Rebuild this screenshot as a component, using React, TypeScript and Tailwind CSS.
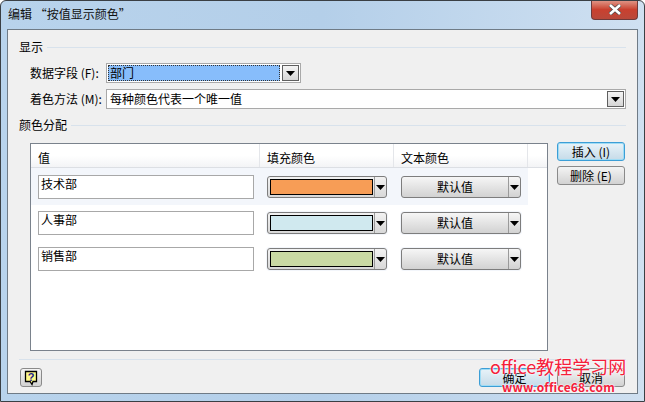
import { ReactNode } from "react";

const font = { fontFamily: '"Noto Sans CJK SC", "Liberation Sans", sans-serif' };

function Arrow() {
  return (
    <svg width="9" height="5" viewBox="0 0 9 5">
      <path d="M0 0h9L4.500 5z" fill="#000" />
    </svg>
  );
}

function ComboButton() {
  return (
    <div className="w-[17px] h-[16px] border border-[#5f5f5f] bg-gradient-to-b from-[#f4f4f4] to-[#d6d6d6] flex items-center justify-center">
      <Arrow />
    </div>
  );
}

function SectionTitle({ children, className }: { children: ReactNode; className?: string }) {
  return (
    <div className={`flex items-center h-[16px] pl-[11px] pr-[11px] ${className ?? ""}`}>
      <span className="pr-[4px] leading-none">{children}</span>
      <div className="flex-1 h-px bg-[#d8e2ec]" />
    </div>
  );
}

function Button({ children, focused, className }: { children: ReactNode; focused?: boolean; className?: string }) {
  return (
    <div
      className={`h-[19px] rounded-[3px] border flex items-center justify-center text-[12px] leading-none bg-gradient-to-b ${
        focused
          ? "border-[#3c9ed6] from-[#e8f3f9] to-[#c6dbe8] shadow-[inset_0_0_0_1px_#9fdcf5]"
          : "border-[#8a8a8a] from-[#f4f4f4] to-[#d2d2d2]"
      } ${className ?? ""}`}
    >
      {children}
    </div>
  );
}

function Row({ name, color, active }: { name: string; color: string; active?: boolean }) {
  return (
    <div className={`flex w-[497px] ${active ? "h-[37px] pt-[7px] bg-[#f3f6fb]" : "h-[36px] pt-[6px]"} pl-[7px]`}>
      <div className="w-[216px] h-[24px] border border-[#a8a8a8] bg-white px-[2px] text-[12px] leading-[16px]">{name}</div>
      <div className="ml-[13px] mt-px w-[120px] h-[22px] rounded-[3px] border border-[#7d7d7d] bg-gradient-to-b from-[#f2f2f2] to-[#d8d8d8] shadow-[0_0_0_1px_#f3f6fb] flex items-center pl-[2px]">
        <div className="w-[103px] h-[16px] border border-black" style={{ backgroundColor: color }} />
        <div className="flex-1 flex justify-center border-l border-[#9a9a9a] h-full items-center ml-px">
          <Arrow />
        </div>
      </div>
      <div className="ml-[14px] mt-px w-[120px] h-[22px] rounded-[3px] border border-[#7d7d7d] bg-gradient-to-b from-[#f6f6f6] to-[#d2d2d2] shadow-[0_0_0_1px_#f3f6fb] flex items-center">
        <span className="w-[106px] text-center text-[12px] leading-none">默认值</span>
        <div className="flex-1 flex justify-center border-l border-[#9a9a9a] h-full items-center">
          <Arrow />
        </div>
      </div>
    </div>
  );
}

function HeaderCell({ children, className }: { children?: ReactNode; className: string }) {
  return (
    <div className={`h-full border-r border-[#e4e6ea] pl-[7px] pt-[4px] flex items-center text-[12px] leading-none ${className}`}>{children}</div>
  );
}

export default function App() {
  return (
    <div
      className="relative w-[645px] h-[402px] overflow-hidden text-[12px] text-black bg-gradient-to-r from-[#b8d3ec] via-[#b4cfe9] to-[#cfe0f1] border border-[#3a3f44] rounded-t-[6px] flex flex-col"
      style={font}
    >
      <div className="h-[28px] shrink-0 flex items-start relative">
        <span className="pl-[7px] pt-[7px] leading-none text-[#111]">编辑 “按值显示颜色”</span>
        <div className="ml-auto mr-[6px] -mt-px w-[47px] h-[20px] rounded-b-[4px] border border-[#6e3a3a] border-t-0 bg-gradient-to-b from-[#e09a8c] via-[#c9402f] to-[#b9483a] flex items-center justify-center">
          <svg width="14" height="11" viewBox="0 0 14 11">
            <path d="M2 1l10 9M12 1L2 10" stroke="#4a4a4a" strokeWidth="4" />
            <path d="M2 1l10 9M12 1L2 10" stroke="#fff" strokeWidth="2.600" />
          </svg>
        </div>
      </div>

      <div className="mx-[6px] mb-[7px] h-[366px] border border-[#6f7b86] bg-[#f0f0f0] flex flex-col">
        <SectionTitle className="mt-[9px]">显示</SectionTitle>

        <div className="mt-[8px] flex items-center h-[20px] pl-[22px]">
          <span className="w-[76px] whitespace-nowrap leading-none">数据字段 (F):</span>
          <div className="w-[195px] h-[20px] border border-[#a9a9a9] bg-white flex items-center p-px">
            <div className="flex-1 h-full bg-[#87bdfb] border border-dotted border-[#333] leading-[14px] pl-px">部门</div>
            <div className="ml-[2px]">
              <ComboButton />
            </div>
          </div>
        </div>

        <div className="mt-[6px] flex items-center h-[20px] pl-[22px]">
          <span className="w-[76px] whitespace-nowrap leading-none">着色方法 (M):</span>
          <div className="w-[520px] h-[20px] border border-[#a9a9a9] bg-white flex items-center justify-between pl-[3px] pr-px">
            <span className="leading-none">每种颜色代表一个唯一值</span>
            <ComboButton />
          </div>
        </div>

        <SectionTitle className="mt-[8px]">颜色分配</SectionTitle>

        <div className="mt-[10px] flex pl-[22px]">
          <div className="w-[518px] h-[208px] border border-[#7a828c] bg-white">
            <div className="flex h-[24px] border-b border-[#dcdfe4] bg-gradient-to-b from-white from-50% to-[#f3f4f6]">
              <HeaderCell className="w-[229px]">值</HeaderCell>
              <HeaderCell className="w-[134px]">填充颜色</HeaderCell>
              <HeaderCell className="w-[134px]">文本颜色</HeaderCell>
            </div>
            <Row name="技术部" color="#f79d56" active />
            <Row name="人事部" color="#d0e9ef" />
            <Row name="销售部" color="#c9d9a3" />
          </div>
          <div className="ml-[9px] -mt-px w-[68px] flex flex-col gap-[5px]">
            <Button focused>插入 (I)</Button>
            <Button>删除 (E)</Button>
          </div>
        </div>

        <div className="mt-[8px] ml-[11px] mr-[11px] h-px bg-[#d8e2ec]" />

        <div className="mt-[8px] flex pl-[12px] pr-[12px]">
          <div className="w-[22px] h-[19px] rounded-[3px] border border-[#8a8a8a] bg-gradient-to-b from-[#f4f4f4] to-[#d2d2d2] flex items-center justify-center">
            <svg width="14" height="16" viewBox="0 0 14 16">
              <path d="M1.500 1.500h11v10H9l-1 3-2-3H1.500z" fill="#fff98a" stroke="#000" strokeWidth="1.300" />
              <text x="7" y="10.500" textAnchor="middle" fontSize="11" fontWeight="700" fill="#1a1a8c" fontFamily="Liberation Sans">?</text>
            </svg>
          </div>
          <div className="ml-auto flex gap-[7px]">
            <Button focused className="w-[71px]">确定</Button>
            <Button className="w-[68px]">取消</Button>
          </div>
        </div>
      </div>

      <div className="absolute left-[489px] top-[356px] text-[18px] leading-[18px] text-[#f5203a] whitespace-nowrap [text-shadow:0_0_2px_#fff,0_0_2px_#fff]">
        office教程学习网
      </div>
      <div className="absolute left-[501px] top-[379px] text-[12px] leading-[14px] font-bold tracking-[0.2px] text-[#f5203a] whitespace-nowrap [text-shadow:0_0_2px_#fff,0_0_2px_#fff]">
        www.office68.com
      </div>
    </div>
  );
}
